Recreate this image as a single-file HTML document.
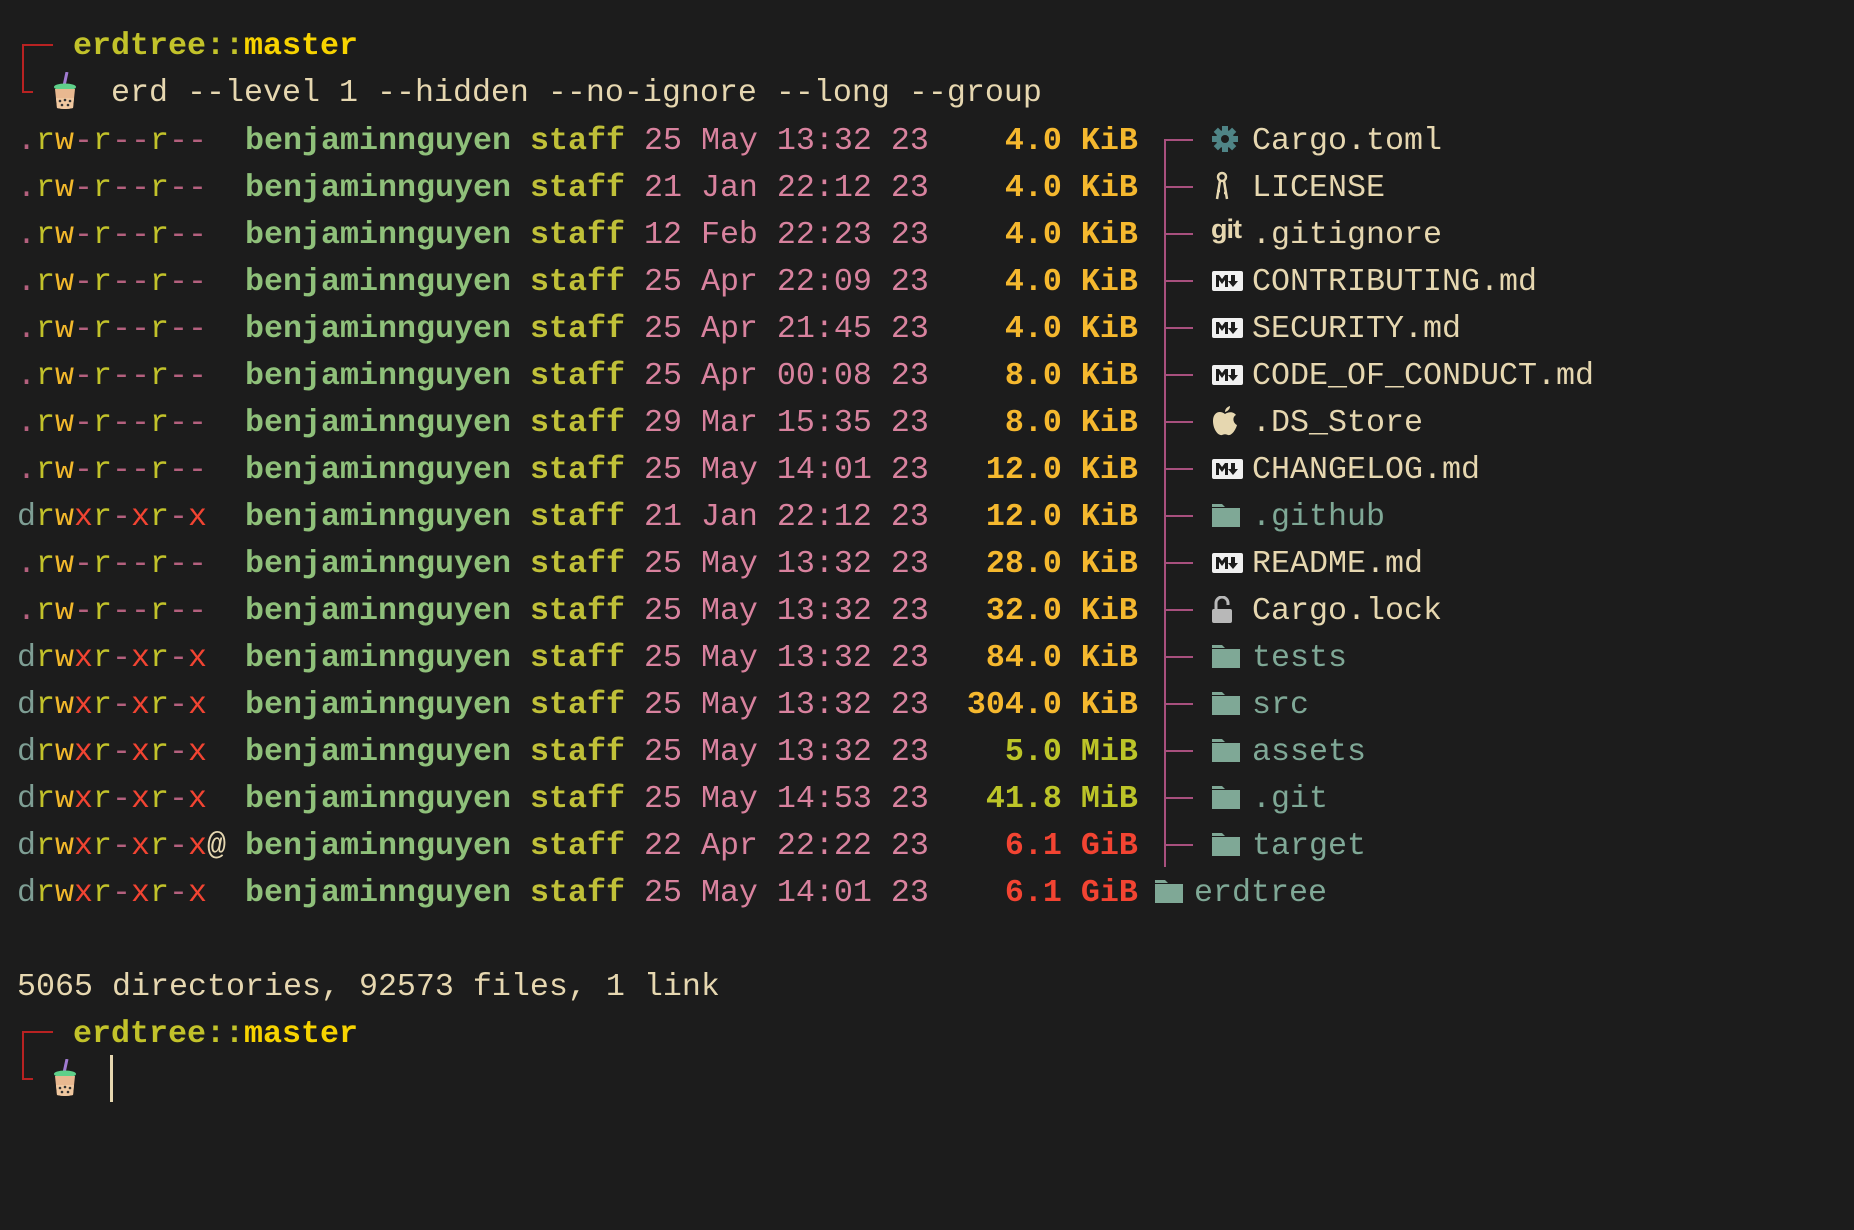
<!DOCTYPE html>
<html><head><meta charset="utf-8"><style>
html,body{margin:0;padding:0;background:#1c1c1c;width:1854px;height:1230px;overflow:hidden}
body{position:relative;font-family:"Liberation Mono","DejaVu Sans Mono",monospace;font-size:31.67px}
.l{position:absolute;left:17px;height:47px;line-height:47px;white-space:pre;margin-top:2px}
.p{color:#b4607e}.r{color:#c2c22a}.w{color:#f2b82c}.x{color:#f24432}.d{color:#7e9e94}
.u{color:#8fc07a;font-weight:bold}.g{color:#c0c038;font-weight:bold}.dt{color:#d8829e}
.k{color:#f5b82e;font-weight:bold}.m{color:#bcc428;font-weight:bold}.gi{color:#f24432;font-weight:bold}
.c{color:#e6d7b0}.ab{position:absolute;white-space:pre;height:47px;line-height:47px;margin-top:2px}
.fn{color:#e6d7b0}.dn{color:#7fa896}
.h{position:absolute;left:1164px;width:29px;height:2px;background:#a8507e}
.ic{position:absolute;left:1212px}
</style></head><body>
<!-- prompt 1 -->
<div style="position:absolute;left:22px;top:44px;width:31px;height:2px;background:#b82222"></div>
<div style="position:absolute;left:22px;top:44px;width:2px;height:49px;background:#b82222"></div>
<div style="position:absolute;left:22px;top:91px;width:11px;height:2px;background:#b82222"></div>
<div class="l" style="left:73px;top:21px"><span style="color:#c2c22a;font-weight:bold">erdtree::</span><span style="color:#f7d300;font-weight:bold">master</span></div>
<svg style="position:absolute;left:52px;top:72px" width="26" height="38" viewBox="0 0 26 38"><path d="M15 0 L12 14" stroke="#a07ad0" stroke-width="3"/><ellipse cx="13" cy="15" rx="11" ry="3.5" fill="#5fd08a"/><path d="M3 17 L23 17 L21 36 Q13 38 5 36 Z" fill="#e8b890"/><path d="M4 26 L22 26 L21 36 Q13 38 5 36Z" fill="#f0c8a0"/><g fill="#333"><circle cx="8" cy="29" r="1.3"/><circle cx="13" cy="28" r="1.3"/><circle cx="18" cy="29" r="1.3"/><circle cx="10" cy="33" r="1.3"/><circle cx="16" cy="33" r="1.3"/></g></svg>
<div class="l c" style="left:111px;top:68px">erd --level 1 --hidden --no-ignore --long --group</div>

<!-- rows -->
<div class="l" style="top:115.5px"><span class="p">.</span><span class="r">r</span><span class="w">w</span><span class="p">-</span><span class="r">r</span><span class="p">--</span><span class="r">r</span><span class="p">--</span>  <span class="u">benjaminnguyen</span> <span class="g">staff</span> <span class="dt">25 May 13:32 23</span>    <span class="k">4.0 KiB</span></div>
<div class="l" style="top:162.5px"><span class="p">.</span><span class="r">r</span><span class="w">w</span><span class="p">-</span><span class="r">r</span><span class="p">--</span><span class="r">r</span><span class="p">--</span>  <span class="u">benjaminnguyen</span> <span class="g">staff</span> <span class="dt">21 Jan 22:12 23</span>    <span class="k">4.0 KiB</span></div>
<div class="l" style="top:209.5px"><span class="p">.</span><span class="r">r</span><span class="w">w</span><span class="p">-</span><span class="r">r</span><span class="p">--</span><span class="r">r</span><span class="p">--</span>  <span class="u">benjaminnguyen</span> <span class="g">staff</span> <span class="dt">12 Feb 22:23 23</span>    <span class="k">4.0 KiB</span></div>
<div class="l" style="top:256.5px"><span class="p">.</span><span class="r">r</span><span class="w">w</span><span class="p">-</span><span class="r">r</span><span class="p">--</span><span class="r">r</span><span class="p">--</span>  <span class="u">benjaminnguyen</span> <span class="g">staff</span> <span class="dt">25 Apr 22:09 23</span>    <span class="k">4.0 KiB</span></div>
<div class="l" style="top:303.5px"><span class="p">.</span><span class="r">r</span><span class="w">w</span><span class="p">-</span><span class="r">r</span><span class="p">--</span><span class="r">r</span><span class="p">--</span>  <span class="u">benjaminnguyen</span> <span class="g">staff</span> <span class="dt">25 Apr 21:45 23</span>    <span class="k">4.0 KiB</span></div>
<div class="l" style="top:350.5px"><span class="p">.</span><span class="r">r</span><span class="w">w</span><span class="p">-</span><span class="r">r</span><span class="p">--</span><span class="r">r</span><span class="p">--</span>  <span class="u">benjaminnguyen</span> <span class="g">staff</span> <span class="dt">25 Apr 00:08 23</span>    <span class="k">8.0 KiB</span></div>
<div class="l" style="top:397.5px"><span class="p">.</span><span class="r">r</span><span class="w">w</span><span class="p">-</span><span class="r">r</span><span class="p">--</span><span class="r">r</span><span class="p">--</span>  <span class="u">benjaminnguyen</span> <span class="g">staff</span> <span class="dt">29 Mar 15:35 23</span>    <span class="k">8.0 KiB</span></div>
<div class="l" style="top:444.5px"><span class="p">.</span><span class="r">r</span><span class="w">w</span><span class="p">-</span><span class="r">r</span><span class="p">--</span><span class="r">r</span><span class="p">--</span>  <span class="u">benjaminnguyen</span> <span class="g">staff</span> <span class="dt">25 May 14:01 23</span>   <span class="k">12.0 KiB</span></div>
<div class="l" style="top:491.5px"><span class="d">d</span><span class="r">r</span><span class="w">w</span><span class="x">x</span><span class="r">r</span><span class="p">-</span><span class="x">x</span><span class="r">r</span><span class="p">-</span><span class="x">x</span>  <span class="u">benjaminnguyen</span> <span class="g">staff</span> <span class="dt">21 Jan 22:12 23</span>   <span class="k">12.0 KiB</span></div>
<div class="l" style="top:538.5px"><span class="p">.</span><span class="r">r</span><span class="w">w</span><span class="p">-</span><span class="r">r</span><span class="p">--</span><span class="r">r</span><span class="p">--</span>  <span class="u">benjaminnguyen</span> <span class="g">staff</span> <span class="dt">25 May 13:32 23</span>   <span class="k">28.0 KiB</span></div>
<div class="l" style="top:585.5px"><span class="p">.</span><span class="r">r</span><span class="w">w</span><span class="p">-</span><span class="r">r</span><span class="p">--</span><span class="r">r</span><span class="p">--</span>  <span class="u">benjaminnguyen</span> <span class="g">staff</span> <span class="dt">25 May 13:32 23</span>   <span class="k">32.0 KiB</span></div>
<div class="l" style="top:632.5px"><span class="d">d</span><span class="r">r</span><span class="w">w</span><span class="x">x</span><span class="r">r</span><span class="p">-</span><span class="x">x</span><span class="r">r</span><span class="p">-</span><span class="x">x</span>  <span class="u">benjaminnguyen</span> <span class="g">staff</span> <span class="dt">25 May 13:32 23</span>   <span class="k">84.0 KiB</span></div>
<div class="l" style="top:679.5px"><span class="d">d</span><span class="r">r</span><span class="w">w</span><span class="x">x</span><span class="r">r</span><span class="p">-</span><span class="x">x</span><span class="r">r</span><span class="p">-</span><span class="x">x</span>  <span class="u">benjaminnguyen</span> <span class="g">staff</span> <span class="dt">25 May 13:32 23</span>  <span class="k">304.0 KiB</span></div>
<div class="l" style="top:726.5px"><span class="d">d</span><span class="r">r</span><span class="w">w</span><span class="x">x</span><span class="r">r</span><span class="p">-</span><span class="x">x</span><span class="r">r</span><span class="p">-</span><span class="x">x</span>  <span class="u">benjaminnguyen</span> <span class="g">staff</span> <span class="dt">25 May 13:32 23</span>    <span class="m">5.0 MiB</span></div>
<div class="l" style="top:773.5px"><span class="d">d</span><span class="r">r</span><span class="w">w</span><span class="x">x</span><span class="r">r</span><span class="p">-</span><span class="x">x</span><span class="r">r</span><span class="p">-</span><span class="x">x</span>  <span class="u">benjaminnguyen</span> <span class="g">staff</span> <span class="dt">25 May 14:53 23</span>   <span class="m">41.8 MiB</span></div>
<div class="l" style="top:820.5px"><span class="d">d</span><span class="r">r</span><span class="w">w</span><span class="x">x</span><span class="r">r</span><span class="p">-</span><span class="x">x</span><span class="r">r</span><span class="p">-</span><span class="x">x</span><span class="c">@</span> <span class="u">benjaminnguyen</span> <span class="g">staff</span> <span class="dt">22 Apr 22:22 23</span>    <span class="gi">6.1 GiB</span></div>
<div class="l" style="top:867.5px"><span class="d">d</span><span class="r">r</span><span class="w">w</span><span class="x">x</span><span class="r">r</span><span class="p">-</span><span class="x">x</span><span class="r">r</span><span class="p">-</span><span class="x">x</span>  <span class="u">benjaminnguyen</span> <span class="g">staff</span> <span class="dt">25 May 14:01 23</span>    <span class="gi">6.1 GiB</span></div>

<!-- tree -->
<div style="position:absolute;left:1164px;top:139px;width:2px;height:728px;background:#a8507e"></div>
<div class="h" style="top:139px"></div><div class="h" style="top:186px"></div><div class="h" style="top:233px"></div><div class="h" style="top:280px"></div><div class="h" style="top:327px"></div><div class="h" style="top:374px"></div><div class="h" style="top:421px"></div><div class="h" style="top:468px"></div><div class="h" style="top:515px"></div><div class="h" style="top:562px"></div><div class="h" style="top:609px"></div><div class="h" style="top:656px"></div><div class="h" style="top:703px"></div><div class="h" style="top:750px"></div><div class="h" style="top:797px"></div><div class="h" style="top:844px"></div>

<!-- icons -->
<svg class="ic" style="top:126px" width="26" height="26" viewBox="-13 -13 26 26"><g fill="#4f8486"><circle r="9"/><g id="t"><rect x="-3" y="-13" width="6" height="6"/><rect x="-3" y="7" width="6" height="6"/></g><use href="#t" transform="rotate(45)"/><use href="#t" transform="rotate(90)"/><use href="#t" transform="rotate(135)"/></g><circle r="4" fill="#1c1c1c"/></svg>
<svg class="ic" style="top:171px" width="20" height="30" viewBox="0 0 20 30"><g fill="none" stroke="#e6d7b0" stroke-width="2.5"><circle cx="10" cy="6" r="4"/><path d="M8 10 L5 28 M12 10 L15 28 M5 20 L8 20 M15 22 L12 22"/></g></svg>
<div class="ab" style="left:1211px;top:204px;color:#e6d7b0;font-weight:bold;font-family:'Liberation Sans',sans-serif;font-size:27px;letter-spacing:-1px">git</div>
<svg class="ic" style="top:271px" width="31" height="20" viewBox="0 0 31 20"><rect width="31" height="20" rx="2" fill="#f0f0f0"/><path d="M4 16V4h3l3 4 3-4h3v12h-3V9l-3 4-3-4v7z M19 4h4v6h3l-5 6-5-6h3z" fill="#1c1c1c"/></svg>
<svg class="ic" style="top:318px" width="31" height="20" viewBox="0 0 31 20"><rect width="31" height="20" rx="2" fill="#f0f0f0"/><path d="M4 16V4h3l3 4 3-4h3v12h-3V9l-3 4-3-4v7z M19 4h4v6h3l-5 6-5-6h3z" fill="#1c1c1c"/></svg>
<svg class="ic" style="top:365px" width="31" height="20" viewBox="0 0 31 20"><rect width="31" height="20" rx="2" fill="#f0f0f0"/><path d="M4 16V4h3l3 4 3-4h3v12h-3V9l-3 4-3-4v7z M19 4h4v6h3l-5 6-5-6h3z" fill="#1c1c1c"/></svg>
<svg class="ic" style="top:406px" width="26" height="30" viewBox="0 0 26 30"><path d="M13 8 C8 4 1 6 1 15 C1 23 6 30 10 29 C12 28 14 28 16 29 C20 30 24 23 25 19 C21 17 20 11 24 9 C21 5 16 6 13 8Z M13 6 C13 3 15 1 18 0 C18 3 16 5 13 6Z" fill="#e6d7b0"/></svg>
<svg class="ic" style="top:459px" width="31" height="20" viewBox="0 0 31 20"><rect width="31" height="20" rx="2" fill="#f0f0f0"/><path d="M4 16V4h3l3 4 3-4h3v12h-3V9l-3 4-3-4v7z M19 4h4v6h3l-5 6-5-6h3z" fill="#1c1c1c"/></svg>
<svg class="ic" style="top:503px" width="28" height="24" viewBox="0 0 28 24"><path d="M0 5h28v19H0z" fill="#7fa896"/><path d="M0 1h10l3 3H0z" fill="#7fa896"/></svg>
<svg class="ic" style="top:553px" width="31" height="20" viewBox="0 0 31 20"><rect width="31" height="20" rx="2" fill="#f0f0f0"/><path d="M4 16V4h3l3 4 3-4h3v12h-3V9l-3 4-3-4v7z M19 4h4v6h3l-5 6-5-6h3z" fill="#1c1c1c"/></svg>
<svg class="ic" style="top:596px" width="22" height="28" viewBox="0 0 22 28"><path d="M4 13 V7 A6 6 0 0 1 16 7 V9" fill="none" stroke="#b8b8b8" stroke-width="3"/><rect x="0" y="13" width="20" height="14" rx="2" fill="#b8b8b8"/></svg>
<svg class="ic" style="top:644px" width="28" height="24" viewBox="0 0 28 24"><path d="M0 5h28v19H0z" fill="#7fa896"/><path d="M0 1h10l3 3H0z" fill="#7fa896"/></svg>
<svg class="ic" style="top:691px" width="28" height="24" viewBox="0 0 28 24"><path d="M0 5h28v19H0z" fill="#7fa896"/><path d="M0 1h10l3 3H0z" fill="#7fa896"/></svg>
<svg class="ic" style="top:738px" width="28" height="24" viewBox="0 0 28 24"><path d="M0 5h28v19H0z" fill="#7fa896"/><path d="M0 1h10l3 3H0z" fill="#7fa896"/></svg>
<svg class="ic" style="top:785px" width="28" height="24" viewBox="0 0 28 24"><path d="M0 5h28v19H0z" fill="#7fa896"/><path d="M0 1h10l3 3H0z" fill="#7fa896"/></svg>
<svg class="ic" style="top:832px" width="28" height="24" viewBox="0 0 28 24"><path d="M0 5h28v19H0z" fill="#7fa896"/><path d="M0 1h10l3 3H0z" fill="#7fa896"/></svg>
<svg class="ic" style="left:1155px;top:879px" width="28" height="24" viewBox="0 0 28 24"><path d="M0 5h28v19H0z" fill="#7fa896"/><path d="M0 1h10l3 3H0z" fill="#7fa896"/></svg>

<!-- names -->
<div class="ab fn" style="left:1252px;top:115.5px">Cargo.toml</div>
<div class="ab fn" style="left:1252px;top:162.5px">LICENSE</div>
<div class="ab fn" style="left:1252px;top:209.5px">.gitignore</div>
<div class="ab fn" style="left:1252px;top:256.5px">CONTRIBUTING.md</div>
<div class="ab fn" style="left:1252px;top:303.5px">SECURITY.md</div>
<div class="ab fn" style="left:1252px;top:350.5px">CODE_OF_CONDUCT.md</div>
<div class="ab fn" style="left:1252px;top:397.5px">.DS_Store</div>
<div class="ab fn" style="left:1252px;top:444.5px">CHANGELOG.md</div>
<div class="ab dn" style="left:1252px;top:491.5px">.github</div>
<div class="ab fn" style="left:1252px;top:538.5px">README.md</div>
<div class="ab fn" style="left:1252px;top:585.5px">Cargo.lock</div>
<div class="ab dn" style="left:1252px;top:632.5px">tests</div>
<div class="ab dn" style="left:1252px;top:679.5px">src</div>
<div class="ab dn" style="left:1252px;top:726.5px">assets</div>
<div class="ab dn" style="left:1252px;top:773.5px">.git</div>
<div class="ab dn" style="left:1252px;top:820.5px">target</div>
<div class="ab dn" style="left:1194px;top:867.5px">erdtree</div>

<div class="l c" style="top:961.5px">5065 directories, 92573 files, 1 link</div>

<!-- prompt 2 -->
<div style="position:absolute;left:22px;top:1031px;width:31px;height:2px;background:#b82222"></div>
<div style="position:absolute;left:22px;top:1031px;width:2px;height:49px;background:#b82222"></div>
<div style="position:absolute;left:22px;top:1078px;width:11px;height:2px;background:#b82222"></div>
<div class="l" style="left:73px;top:1008.5px"><span style="color:#c2c22a;font-weight:bold">erdtree::</span><span style="color:#f7d300;font-weight:bold">master</span></div>
<svg style="position:absolute;left:52px;top:1059px" width="26" height="38" viewBox="0 0 26 38"><path d="M15 0 L12 14" stroke="#a07ad0" stroke-width="3"/><ellipse cx="13" cy="15" rx="11" ry="3.5" fill="#5fd08a"/><path d="M3 17 L23 17 L21 36 Q13 38 5 36 Z" fill="#e8b890"/><path d="M4 26 L22 26 L21 36 Q13 38 5 36Z" fill="#f0c8a0"/><g fill="#333"><circle cx="8" cy="29" r="1.3"/><circle cx="13" cy="28" r="1.3"/><circle cx="18" cy="29" r="1.3"/><circle cx="10" cy="33" r="1.3"/><circle cx="16" cy="33" r="1.3"/></g></svg>
<div style="position:absolute;left:110px;top:1055px;width:3px;height:47px;background:#e6d7b0"></div>
</body></html>
